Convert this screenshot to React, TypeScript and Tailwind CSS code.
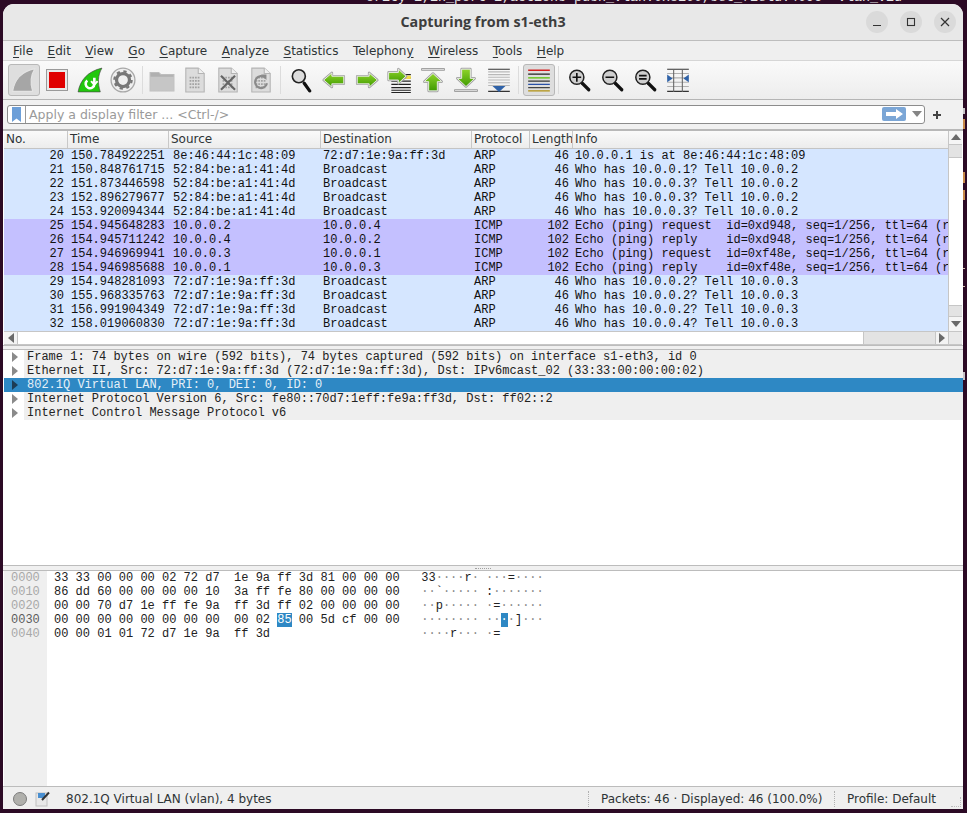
import React from 'react';

const mono = "font-['Liberation_Mono',monospace] text-[12px] leading-[14px] whitespace-pre";

const menus: [string, string, string][] = [
  ['', 'F', 'ile'],
  ['', 'E', 'dit'],
  ['', 'V', 'iew'],
  ['', 'G', 'o'],
  ['', 'C', 'apture'],
  ['', 'A', 'nalyze'],
  ['', 'S', 'tatistics'],
  ['Telephon', 'y', ''],
  ['', 'W', 'ireless'],
  ['', 'T', 'ools'],
  ['', 'H', 'elp'],
];

const packets = [
  ['20', '150.784922251', '8e:46:44:1c:48:09', '72:d7:1e:9a:ff:3d', 'ARP', '46', '10.0.0.1 is at 8e:46:44:1c:48:09'],
  ['21', '150.848761715', '52:84:be:a1:41:4d', 'Broadcast', 'ARP', '46', 'Who has 10.0.0.1? Tell 10.0.0.2'],
  ['22', '151.873446598', '52:84:be:a1:41:4d', 'Broadcast', 'ARP', '46', 'Who has 10.0.0.3? Tell 10.0.0.2'],
  ['23', '152.896279677', '52:84:be:a1:41:4d', 'Broadcast', 'ARP', '46', 'Who has 10.0.0.3? Tell 10.0.0.2'],
  ['24', '153.920094344', '52:84:be:a1:41:4d', 'Broadcast', 'ARP', '46', 'Who has 10.0.0.3? Tell 10.0.0.2'],
  ['25', '154.945648283', '10.0.0.2', '10.0.0.4', 'ICMP', '102', 'Echo (ping) request  id=0xd948, seq=1/256, ttl=64 (r'],
  ['26', '154.945711242', '10.0.0.4', '10.0.0.2', 'ICMP', '102', 'Echo (ping) reply    id=0xd948, seq=1/256, ttl=64 (r'],
  ['27', '154.946969941', '10.0.0.3', '10.0.0.1', 'ICMP', '102', 'Echo (ping) request  id=0xf48e, seq=1/256, ttl=64 (r'],
  ['28', '154.946985688', '10.0.0.1', '10.0.0.3', 'ICMP', '102', 'Echo (ping) reply    id=0xf48e, seq=1/256, ttl=64 (r'],
  ['29', '154.948281093', '72:d7:1e:9a:ff:3d', 'Broadcast', 'ARP', '46', 'Who has 10.0.0.2? Tell 10.0.0.3'],
  ['30', '155.968335763', '72:d7:1e:9a:ff:3d', 'Broadcast', 'ARP', '46', 'Who has 10.0.0.2? Tell 10.0.0.3'],
  ['31', '156.991904349', '72:d7:1e:9a:ff:3d', 'Broadcast', 'ARP', '46', 'Who has 10.0.0.2? Tell 10.0.0.3'],
  ['32', '158.019060830', '72:d7:1e:9a:ff:3d', 'Broadcast', 'ARP', '46', 'Who has 10.0.0.4? Tell 10.0.0.3'],
];

const details = [
  'Frame 1: 74 bytes on wire (592 bits), 74 bytes captured (592 bits) on interface s1-eth3, id 0',
  'Ethernet II, Src: 72:d7:1e:9a:ff:3d (72:d7:1e:9a:ff:3d), Dst: IPv6mcast_02 (33:33:00:00:00:02)',
  '802.1Q Virtual LAN, PRI: 0, DEI: 0, ID: 0',
  'Internet Protocol Version 6, Src: fe80::70d7:1eff:fe9a:ff3d, Dst: ff02::2',
  'Internet Control Message Protocol v6',
];

const hexRows = [
  ['0000', '33 33 00 00 00 02 72 d7  1e 9a ff 3d 81 00 00 00', '33····r· ···=····'],
  ['0010', '86 dd 60 00 00 00 00 10  3a ff fe 80 00 00 00 00', '··`····· :·······'],
  ['0020', '00 00 70 d7 1e ff fe 9a  ff 3d ff 02 00 00 00 00', '··p····· ·=······'],
  ['0030', '00 00 00 00 00 00 00 00  00 02 85 00 5d cf 00 00', '········ ··#·]···'],
  ['0040', '00 00 01 01 72 d7 1e 9a  ff 3d', '····r··· ·='],
];

const Ascii = ({ text }: { text: string }) => (
  <>
    {text.split('').map((c, i) =>
      c === '·' ? (
        <span key={i} className="text-[#8a8a8a]">·</span>
      ) : c === '#' ? (
        <span key={i} className="bg-[#2e88c4] text-white">·</span>
      ) : (
        <span key={i}>{c}</span>
      )
    )}
  </>
);

const Tri = ({ dir, className }: { dir: 'up' | 'down' | 'left' | 'right'; className?: string }) => {
  const pts = { up: '0,7 5,1 10,7', down: '0,2 10,2 5,8', left: '8,0 8,10 2,5', right: '2,0 2,10 8,5' }[dir];
  return (
    <svg width="10" height="10" viewBox="0 0 10 10" className={className}>
      <polygon points={pts} fill="currentColor" />
    </svg>
  );
};

// fat green arrow with the pale double outline the toolbar icons have
const GreenPath = ({ d }: { d: string }) => (
  <>
    <path d={d} fill="#f4f4f4" stroke="#a4a4a4" strokeWidth="2.4" strokeLinejoin="round" />
    <path d={d} fill="url(#gr)" stroke="#f4f4f4" strokeWidth="0.8" strokeLinejoin="round" />
  </>
);

const Ico = ({ children }: { children: React.ReactNode }) => (
  <svg width="26" height="26" viewBox="0 0 24 24" fill="none">{children}</svg>
);

const FileIco = ({ children }: { children?: React.ReactNode }) => (
  <Ico>
    <path d="M3.5 1 H15 L20.5 6 V23 H3.5 Z" fill="#dcdcdc" stroke="#b4b4b4" />
    <path d="M15 1 V6 H20.5" fill="#f0f0f0" stroke="#b4b4b4" />
    {[9, 12, 15, 18].map((y) =>
      [7, 9.5, 12, 14.5].map((x) => <rect key={`${x}-${y}`} x={x} y={y} width="1.6" height="1.6" fill="#a2a2a2" />)
    )}
    {children}
  </Ico>
);

const Lens = ({ children }: { children?: React.ReactNode }) => (
  <Ico>
    <line x1="15" y1="15" x2="21" y2="21" stroke="#111" strokeWidth="3" strokeLinecap="round" />
    <circle cx="10" cy="9.5" r="6.5" fill="#cfcfcf" stroke="#222" strokeWidth="1.4" />
    {children}
  </Ico>
);

const Lines = ({ ys, color = '#222', x1 = 2 }: { ys: number[]; color?: string; x1?: number }) => (
  <>
    {ys.map((y) => (
      <line key={y} x1={x1} x2="22" y1={y} y2={y} stroke={color} strokeWidth="1" />
    ))}
  </>
);

const Btn = ({ children, pressed }: { children: React.ReactNode; pressed?: boolean }) => (
  <div className="w-[33px] h-[32px] flex items-center justify-center shrink-0">
    <div className={`w-[32px] h-[32px] flex items-center justify-center rounded-[3px] ${pressed ? 'bg-[#dedede] border border-[#b8b8b8]' : ''}`}>
      {children}
    </div>
  </div>
);

const Sep = ({ wide }: { wide?: boolean }) => (
  <div className={`${wide ? 'w-[7.5px]' : 'w-[6.5px]'} flex justify-center shrink-0`}>
    <div className="w-px h-[28px] bg-[#dcdcdc]" />
  </div>
);

const Toolbar = () => (
  <div className="h-[39px] flex items-center pl-[4px] bg-gradient-to-b from-[#fafafa] to-[#ededed] border-b border-[#b5b5b5]">
    <svg width="0" height="0" className="absolute">
      <defs>
        <linearGradient id="gr" x1="0" y1="0" x2="0" y2="1">
          <stop offset="0" stopColor="#8ed42a" />
          <stop offset="1" stopColor="#3f9a00" />
        </linearGradient>
      </defs>
    </svg>
    <Btn pressed>
      <Ico>
        <path d="M1.5 22.5 C3 12 10 4 22 1.5 C18 8 17.5 15 20 22.5 Z" fill="#a6a6a6" stroke="#e4e4e4" />
      </Ico>
    </Btn>
    <Btn>
      <div className="w-[20px] h-[20px] bg-[#e00000] border-2 border-[#e9e9e9] outline outline-1 outline-[#9a9a9a]" />
    </Btn>
    <Btn>
      <Ico>
        <path d="M1 23 C3 12 10 4 23 1 C19 8 19 15 21.5 23 Z" fill="#22c70e" stroke="#444" strokeWidth="0.6" />
        <path d="M16 10 V15.5 A4 4 0 1 1 9.5 12.5" stroke="#fff" strokeWidth="2.4" fill="none" />
        <path d="M13 13 L16 16.5 L19 13" stroke="#fff" strokeWidth="1.8" fill="none" />
      </Ico>
    </Btn>
    <Btn>
      <Ico>
        <circle cx="12" cy="12" r="11" fill="#efefef" stroke="#a8a8a8" strokeWidth="1.2" />
        <circle cx="12" cy="12" r="6" fill="none" stroke="#777" strokeWidth="3" />
        <circle cx="12" cy="12" r="8" fill="none" stroke="#777" strokeWidth="2" strokeDasharray="3 3.3" />
      </Ico>
    </Btn>
    <Sep />
    <Btn>
      <Ico>
        <path d="M1 5 H9 L11 7 H23 V22 H1 Z" fill="#b0b0b0" stroke="#bdbdbd" />
        <path d="M1 9 H23 V22 H1 Z" fill="#c6c6c6" />
      </Ico>
    </Btn>
    <Btn><FileIco /></Btn>
    <Btn>
      <FileIco>
        <path d="M5.5 8 L18.5 21 M18.5 8 L5.5 21" stroke="#666" strokeWidth="2" />
      </FileIco>
    </Btn>
    <Btn>
      <FileIco>
        <path d="M16 10 A5.5 5.5 0 1 0 17.5 15" stroke="#8a8a8a" strokeWidth="2" fill="none" />
        <path d="M12 7 L17 7 L17 12 Z" fill="#8a8a8a" />
      </FileIco>
    </Btn>
    <Sep />
    <Btn>
      <Ico>
        <line x1="15" y1="15" x2="20" y2="22" stroke="#111" strokeWidth="3" strokeLinecap="round" />
        <circle cx="10" cy="8.5" r="6" fill="#dcdcdc" stroke="#222" strokeWidth="1.5" />
      </Ico>
    </Btn>
    <Btn><Ico><GreenPath d="M2.5 12 L10 5.5 V8.5 H21 V15.5 H10 V18.5 Z" /></Ico></Btn>
    <Btn><Ico><GreenPath d="M21.5 12 L14 5.5 V8.5 H3 V15.5 H14 V18.5 Z" /></Ico></Btn>
    <Btn>
      <Ico>
        <Lines ys={[7, 10, 13, 16, 19, 21.5, 23.5]} x1={4} />
        <rect x="17" y="8" width="5" height="3" fill="#f2dc4a" />
        <GreenPath d="M17.5 8.5 L10.5 2 V5 H1.5 V12 H10.5 V15 Z" />
      </Ico>
    </Btn>
    <Btn>
      <Ico>
        <rect x="1.5" y="1.5" width="21" height="1.5" fill="#e4e4e4" stroke="#8a8a8a" strokeWidth="0.7" />
        <GreenPath d="M12 6 L20 13.5 H16 V22 H8 V13.5 H4 Z" />
      </Ico>
    </Btn>
    <Btn>
      <Ico>
        <rect x="1.5" y="21" width="21" height="1.5" fill="#e4e4e4" stroke="#8a8a8a" strokeWidth="0.7" />
        <GreenPath d="M12 18 L20 10.5 H16 V2 H8 V10.5 H4 Z" />
      </Ico>
    </Btn>
    <Btn>
      <Ico>
        <Lines ys={[2]} color="#333" />
        <Lines ys={[4.5, 7, 9.5, 12, 14.5, 17]} color="#b8b8b8" />
        <Lines ys={[22.5]} color="#333" />
        <polygon points="6,17.5 18,17.5 12,23" fill="#2f62a8" />
      </Ico>
    </Btn>
    <Sep wide />
    <Btn pressed>
      <Ico>
        <line x1="2" x2="22" y1="3" y2="3" stroke="#d42020" strokeWidth="1.2" />
        <line x1="2" x2="22" y1="6.5" y2="6.5" stroke="#222" strokeWidth="1.2" />
        <line x1="2" x2="22" y1="10" y2="10" stroke="#55c000" strokeWidth="1.2" />
        <line x1="2" x2="22" y1="13" y2="13" stroke="#333" strokeWidth="1.2" />
        <line x1="2" x2="22" y1="16" y2="16" stroke="#2850a8" strokeWidth="1.2" />
        <line x1="2" x2="22" y1="19" y2="19" stroke="#444" strokeWidth="1.2" />
        <line x1="2" x2="22" y1="22" y2="22" stroke="#b09010" strokeWidth="1.2" />
      </Ico>
    </Btn>
    <Sep />
    <Btn>
      <Lens><path d="M6 9.5 H14 M10 5.5 V13.5" stroke="#111" strokeWidth="1.5" /></Lens>
    </Btn>
    <Btn>
      <Lens><path d="M6 9.5 H14" stroke="#111" strokeWidth="1.5" /></Lens>
    </Btn>
    <Btn>
      <Lens><path d="M6.5 8 H13.5 M6.5 11 H13.5" stroke="#111" strokeWidth="1.5" /></Lens>
    </Btn>
    <Btn>
      <Ico>
        <Lines ys={[2, 22.5]} color="#333" />
        <Lines ys={[6, 10, 14, 18]} color="#b0b0b0" />
        <path d="M8 2 V23 M16 2 V23" stroke="#666" strokeWidth="1" />
        <polygon points="2,7 7,10.5 2,14" fill="#2f62a8" />
        <polygon points="22,7 17,10.5 22,14" fill="#2f62a8" />
      </Ico>
    </Btn>
  </div>
);

const FilterBar = () => (
  <div className="h-[31px] bg-[#f1f1f1] flex items-center pl-[4px] pr-[24px] gap-[7px] border-b-2 border-[#b8b8b8]">
    <div className="flex-1 h-[19px] mt-[-1px] bg-white border border-[#8c8c8c] rounded-[3px] flex items-center">
      <div className="w-[18px] h-full border-r border-[#9a9a9a] flex items-center justify-center shrink-0">
        <svg width="9" height="15" viewBox="0 0 9 15"><path d="M0 0 H9 V15 L4.5 11.5 L0 15 Z" fill="#6d9fd8" /></svg>
      </div>
      <div className="flex-1 pl-[3px] text-[12.5px] leading-[17px] text-[#9a9a9a] whitespace-nowrap">
        {'Apply a display filter ... <Ctrl-/>'}
      </div>
      <div className="w-[24px] h-[14px] rounded-[2px] bg-[#7ba6d6] flex items-center justify-center shrink-0">
        <svg width="17" height="10" viewBox="0 0 17 10"><path d="M0 3 H10 V0 L17 5 L10 10 V7 H0 Z" fill="#fff" /></svg>
      </div>
      <div className="w-[18px] flex justify-end pr-[2px] text-[#858585] shrink-0"><Tri dir="down" /></div>
    </div>
    <svg width="10" height="10" viewBox="0 0 10 10" className="shrink-0 mr-[-3px]">
      <path d="M5 1 V9 M1 5 H9" stroke="#444" strokeWidth="2" />
    </svg>
  </div>
);

const PacketList = () => (
  <div className="flex h-[214px] shrink-0 pl-px">
    <div className="w-[944px] flex flex-col shrink-0">
      <div className="grid grid-cols-[63px_101px_152px_151px_58px_43px_1fr] h-[18px] bg-gradient-to-b from-[#fafafa] to-[#ececec] border-b border-[#c4c4c4] text-[12px] leading-[17px] text-[#2e3436]">
        {['No.', 'Time', 'Source', 'Destination', 'Protocol', 'Length', 'Info'].map((h, i) => (
          <div key={h} className={`overflow-hidden whitespace-nowrap ${i === 0 ? 'pl-[2px]' : 'pl-[2px] border-l border-[#c8c8c8]'}`}>{h}</div>
        ))}
      </div>
      {packets.map((p) => (
        <div
          key={p[0]}
          className={`grid grid-cols-[63px_101px_152px_151px_58px_43px_1fr] h-[14px] text-[#111] ${mono} ${p[4] === 'ICMP' ? 'bg-[#c4c0ff]' : 'bg-[#d5e6ff]'}`}
        >
          <div className="text-right pr-[3px]">{p[0]}</div>
          <div className="pl-[4px]">{p[1]}</div>
          <div className="pl-[5px]">{p[2]}</div>
          <div className="pl-[3px]">{p[3]}</div>
          <div className="pl-[3px]">{p[4]}</div>
          <div className="text-right pr-[3px]">{p[5]}</div>
          <div className="pl-[3px] overflow-hidden">{p[6]}</div>
        </div>
      ))}
      <div className="h-[14px] flex bg-[#e3e3e3] border-y border-[#c6c6c6]">
        <div className="w-[14px] flex items-center justify-center text-[#6a6a6a] border-r border-[#c6c6c6] bg-[#f3f3f3]"><Tri dir="left" /></div>
        <div className="w-[846px] bg-white border-r border-[#c6c6c6]" />
        <div className="flex-1" />
        <div className="w-[13px] flex items-center justify-center text-[#6a6a6a] border-l border-[#c6c6c6] bg-[#f3f3f3]"><Tri dir="right" /></div>
      </div>
    </div>
    <div className="w-[14px] flex flex-col shrink-0 border-l border-[#c6c6c6]">
      <div className="h-[13px] flex items-center justify-center text-[#6a6a6a] bg-[#f5f5f5]"><Tri dir="up" /></div>
      <div className="h-[13px] bg-[#e3e3e3] border-t border-[#c6c6c6]" />
      <div className="h-[148px] bg-white border-t border-[#c6c6c6]" />
      <div className="h-[11px] bg-[#e3e3e3] border-t border-[#c6c6c6]" />
      <div className="h-[15px] flex items-center justify-center text-[#6a6a6a] bg-[#f5f5f5] border-t border-[#c6c6c6]"><Tri dir="down" /></div>
      <div className="flex-1 bg-[#e9e9e9] border-y border-[#c6c6c6]" />
    </div>
  </div>
);

const DetailTree = () => (
  <div className="h-[215px] shrink-0 bg-white pl-px flex flex-col">
    {details.map((d, i) => (
      <div key={d} className={`h-[14px] flex ${mono} ${i === 2 ? 'bg-[#2e88c4] text-[#e6f0f8]' : ''}`}>
        <div className={`w-[20px] pl-[6px] flex items-center shrink-0 ${i === 2 ? 'text-[#1d3c55]' : 'text-[#8a8a8a]'}`}><Tri dir="right" /></div>
        <div className={`flex-1 pl-[3px] overflow-hidden ${i === 2 ? '' : 'bg-[#efefef] text-[#222]'}`}>{d}</div>
      </div>
    ))}
  </div>
);

const Splitter = ({ h, grip }: { h: string; grip?: boolean }) => (
  <div className={`${h} shrink-0 bg-[#f0f0f0] border-y border-[#bcbcbc] flex items-center justify-center`}>
    {grip && <div className="w-[16px] border-t border-dotted border-[#a0a0a0]" />}
  </div>
);

const HexView = () => (
  <div className={`flex-1 flex bg-white pl-px ${mono}`}>
    <div className="w-[43px] bg-[#efefef] pl-[7px] shrink-0">
      {hexRows.map((r) => (
        <div key={r[0]} className={r[0] === '0030' ? 'text-[#5c5c5c]' : 'text-[#a8a8a8]'}>{r[0]}</div>
      ))}
    </div>
    <div className="pl-[7px] text-[#222]">
      {hexRows.map((r) => {
        const idx = r[1].indexOf('85');
        return (
          <div key={r[0]} className="h-[14px]">
            {r[0] === '0030' ? (
              <>
                {r[1].slice(0, idx)}
                <span className="bg-[#2e88c4] text-white">85</span>
                {r[1].slice(idx + 2)}
              </>
            ) : (
              r[1]
            )}
          </div>
        );
      })}
    </div>
    <div className="pl-[21.6px] text-[#222]">
      {hexRows.map((r) => (
        <div key={r[0]} className="h-[14px]"><Ascii text={r[2]} /></div>
      ))}
    </div>
  </div>
);

const StatusBar = () => (
  <div className="h-[23px] shrink-0 bg-[#efefef] border-t border-[#bcbcbc] flex items-center pt-[2px] text-[12px] text-[#2e3436] relative">
    <div className="w-[14px] h-[14px] rounded-full bg-[#b0b0ac] border border-[#7c7c7c] ml-[10px] shrink-0" />
    <svg width="16" height="16" viewBox="0 0 16 16" className="ml-[8px] shrink-0">
      <rect x="1" y="2" width="11" height="13" fill="#e8e8e8" stroke="#c0c0c0" />
      <rect x="3" y="2" width="7" height="5" fill="#4a8fd0" />
      <path d="M7 9 L14 1.5" stroke="#333" strokeWidth="2" />
    </svg>
    <div className="ml-[15px] flex-1 whitespace-nowrap">802.1Q Virtual LAN (vlan), 4 bytes</div>
    <div className="h-[16px] border-l border-dotted border-[#b0b0b0] mr-[12px]" />
    <div className="w-[233px] whitespace-nowrap">Packets: 46 · Displayed: 46 (100.0%)</div>
    <div className="h-[16px] border-l border-dotted border-[#b0b0b0] mr-[12px]" />
    <div className="w-[116px] whitespace-nowrap">Profile: Default</div>
    <div className="absolute right-[2px] bottom-[2px] w-[10px] h-[10px] border-r border-b border-dotted border-[#bdbdbd]" />
  </div>
);

// scraps of the terminal behind the window, showing along its right edge
const scraps = [
  'top-[108px] h-[6px] bg-[#c9c4c8]',
  'top-[119px] h-[10px] bg-[#c98a4a]',
  'top-[172px] h-[11px] bg-[#c98a4a]',
  'top-[190px] h-[10px] bg-[#c98a4a]',
  'top-[268px] h-[1px] bg-[#d8c0b0]',
  'top-[286px] h-[1px] bg-[#d8c0b0]',
  'top-[372px] h-[8px] bg-[#c9c4c8]',
];

export default function App() {
  return (
    <div className="relative w-[967px] h-[813px] overflow-hidden bg-[#2c0a25] pl-[3px] pt-[4px] font-['DejaVu_Sans',sans-serif]">
      <div className={`absolute top-[-9px] left-[366px] text-[13.33px] text-[#e8e8e8] ${mono.replace('text-[12px] ', '')}`}>
        ority=1,in_port=1,actions=push_vlan:0x8100,set_field:4096-&gt;vlan_vid
      </div>
      {scraps.map((s) => (
        <div key={s} className={`absolute left-[963px] w-[2px] ${s}`} />
      ))}
      <div className="relative w-[960px] h-[805px] flex flex-col rounded-t-[11px] overflow-hidden bg-white">
        <div className="h-[37px] shrink-0 bg-[#e8e8e8] border-b border-[#bdbdbd] flex items-center relative">
          <div className="w-full text-center text-[14.3px] font-bold text-[#3d3d3d] font-['Open_Sans',sans-serif]">Capturing from s1-eth3</div>
          <div className="absolute right-[7px] top-[7px] flex gap-[12px]">
            <div className="w-[22px] h-[22px] rounded-full bg-[#dadada] flex items-center justify-center">
              <svg width="10" height="10" viewBox="0 0 10 10"><path d="M1 8.5 H9" stroke="#333" strokeWidth="1.2" /></svg>
            </div>
            <div className="w-[22px] h-[22px] rounded-full bg-[#dadada] flex items-center justify-center">
              <svg width="10" height="10" viewBox="0 0 10 10"><rect x="1.5" y="1.5" width="7" height="7" fill="none" stroke="#333" strokeWidth="1.1" /></svg>
            </div>
            <div className="w-[22px] h-[22px] rounded-full bg-[#dadada] flex items-center justify-center">
              <svg width="10" height="10" viewBox="0 0 10 10"><path d="M1 1 L9 9 M9 1 L1 9" stroke="#333" strokeWidth="1.2" /></svg>
            </div>
          </div>
        </div>
        <div className="h-[20px] shrink-0 bg-[#efefef] border-b border-[#d6d6d6] flex items-center gap-[14.5px] pl-[10px] text-[12px] text-[#2e3436]">
          {menus.map(([pre, key, post]) => (
            <div key={pre + key + post} className="whitespace-nowrap">
              {pre}
              <span className="underline underline-offset-2">{key}</span>
              {post}
            </div>
          ))}
        </div>
        <Toolbar />
        <FilterBar />
        <PacketList />
        <Splitter h="h-[5px]" />
        <DetailTree />
        <Splitter h="h-[6px]" grip />
        <HexView />
        <StatusBar />
      </div>
    </div>
  );
}
